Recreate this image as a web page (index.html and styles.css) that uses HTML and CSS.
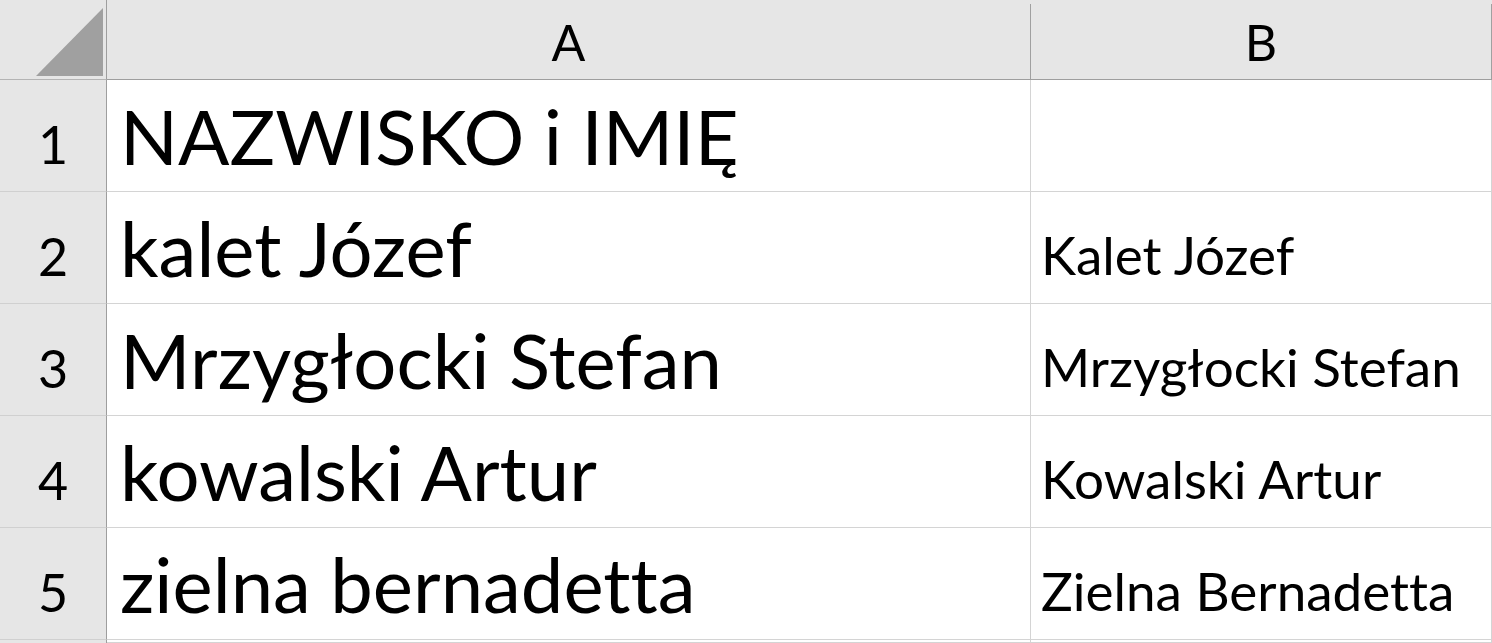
FILE: index.html
```html
<!DOCTYPE html>
<html lang="pl">
<head>
<meta charset="utf-8">
<title>Arkusz</title>
<link rel="stylesheet" href="styles.css">
</head>
<body>
<div class="sheet">
  <div class="corner">
    <svg class="corner-tri" width="106" height="79" viewBox="0 0 106 79"><polygon points="36,76 103,76 103,8" fill="#a0a0a0"/></svg>
  </div>
  <div class="colhead">A</div>
  <div class="colhead">B</div>

  <div class="rowhead">1</div>
  <div class="cell big">NAZWISKO i IMIĘ</div>
  <div class="cell small"></div>

  <div class="rowhead">2</div>
  <div class="cell big">kalet Józef</div>
  <div class="cell small">Kalet Józef</div>

  <div class="rowhead">3</div>
  <div class="cell big">Mrzygłocki Stefan</div>
  <div class="cell small">Mrzygłocki Stefan</div>

  <div class="rowhead">4</div>
  <div class="cell big">kowalski Artur</div>
  <div class="cell small">Kowalski Artur</div>

  <div class="rowhead">5</div>
  <div class="cell big">zielna bernadetta</div>
  <div class="cell small">Zielna Bernadetta</div>

  <div class="rowhead"></div>
  <div class="cell"></div>
  <div class="cell"></div>
</div>
</body>
</html>
```

FILE: styles.css
```css
html, body {
  margin: 0;
  padding: 0;
  background: #ffffff;
  overflow: hidden;
}
body {
  width: 1492px;
  height: 643px;
  font-family: "Lato", "Open Sans", sans-serif;
  font-weight: 400;
  font-variant-ligatures: none;
  color: #000;
}
.sheet {
  display: grid;
  grid-template-columns: 107px 924px 461px;
  grid-template-rows: 80px repeat(5, 112px) 3px;
}
.corner {
  background: #e6e6e6;
  border-right: 1px solid #9e9e9e;
  border-bottom: 1px solid #b4b4b4;
}
.corner-tri {
  display: block;
}
.colhead {
  background:
    linear-gradient(#a0a0a0, #a0a0a0) right top 4px / 1px calc(100% - 4px) no-repeat,
    #e6e6e6;
  border-bottom: 1px solid #9e9e9e;
  display: flex;
  justify-content: center;
  align-items: flex-end;
  font-size: 50px;
  line-height: 1;
  padding-bottom: 12px;
  padding-right: 1px;
  box-sizing: border-box;
}
.rowhead {
  background: #e6e6e6;
  border-right: 1px solid #9e9e9e;
  border-bottom: 1px solid #d0d0d0;
  display: flex;
  justify-content: center;
  align-items: flex-end;
  font-size: 52px;
  line-height: 1;
  padding-bottom: 21px;
  box-sizing: border-box;
}
.cell {
  border-right: 1px solid #d4d4d4;
  border-bottom: 1px solid #d4d4d4;
  display: flex;
  align-items: flex-end;
  white-space: nowrap;
  line-height: 1;
  box-sizing: border-box;
  overflow: hidden;
}
.big {
  font-size: 76px;
  padding: 0 0 17px 13px;
}
.small {
  font-size: 53px;
  padding: 0 0 22px 10px;
}
```
